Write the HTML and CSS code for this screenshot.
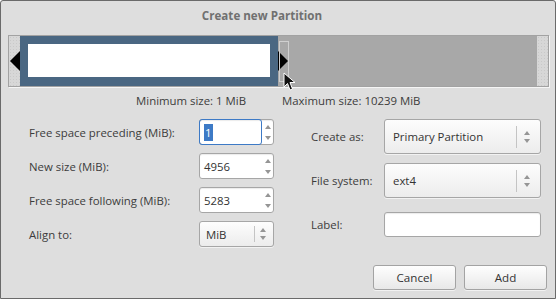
FILE: index.html
```html
<!DOCTYPE html>
<html lang="en">
<head>
    <meta charset="UTF-8">
    <title>Create new Partition</title>
    <link rel="stylesheet" href="styles.css">
</head>
<body>
    <div class="window">
        <div class="title">Create new Partition</div>

        <div class="bar">
            <div class="bar-free"></div>
            <div class="bar-part">
                <span class="handle handle-left"></span>
                <div class="bar-inner"></div>
                <span class="handle handle-right"></span>
                <span class="handle-box"></span>
            </div>
            <div class="bar-rest"></div>
            <div class="bar-free"></div>
            <svg class="cursor" width="13" height="20" viewBox="0 0 13 20">
                <path d="M1 1 L1 15 L4.5 11.5 L7 18 L9.5 17 L7 10.5 L12 10.5 Z" fill="#111" stroke="#fff" stroke-width="1"/>
            </svg>
        </div>

        <div class="limits">
            <span class="limit-min">Minimum size: 1 MiB</span>
            <span class="limit-max">Maximum size: 10239 MiB</span>
        </div>

        <div class="form">
            <div class="col-left">
                <label class="field-label">Free space preceding (MiB):</label>
                <div class="spin">
                    <span class="spin-entry focused"><span class="sel">1</span></span>
                    <span class="arrows"><i class="up"></i><i class="down"></i></span>
                </div>

                <label class="field-label">New size (MiB):</label>
                <div class="spin">
                    <span class="spin-entry">4956</span>
                    <span class="arrows"><i class="up"></i><i class="down"></i></span>
                </div>

                <label class="field-label">Free space following (MiB):</label>
                <div class="spin">
                    <span class="spin-entry">5283</span>
                    <span class="arrows"><i class="up"></i><i class="down"></i></span>
                </div>

                <label class="field-label">Align to:</label>
                <div class="combo combo-small">
                    <span class="combo-text">MiB</span>
                    <span class="combo-sep"></span>
                    <span class="arrows"><i class="up"></i><i class="down"></i></span>
                </div>
            </div>

            <div class="col-right">
                <label class="field-label">Create as:</label>
                <div class="combo">
                    <span class="combo-text">Primary Partition</span>
                    <span class="combo-sep"></span>
                    <span class="arrows"><i class="up"></i><i class="down"></i></span>
                </div>

                <label class="field-label">File system:</label>
                <div class="combo">
                    <span class="combo-text">ext4</span>
                    <span class="combo-sep"></span>
                    <span class="arrows"><i class="up"></i><i class="down"></i></span>
                </div>

                <label class="field-label label-row">Label:</label>
                <div class="entry label-row"></div>
            </div>
        </div>

        <div class="buttons">
            <button class="btn">Cancel</button>
            <button class="btn">Add</button>
        </div>
    </div>
</body>
</html>
```

FILE: styles.css
```css
body {
    margin: 0;
    font-family: 'Open Sans', 'Noto Sans', sans-serif;
    font-size: 11.4px;
    color: #3c3c3c;
}
.window {
    position: relative;
    width: 556px;
    height: 299px;
    box-sizing: border-box;
    border: 1px solid #6a6a6a;
    border-radius: 3px 3px 0 0;
    background: #dedede;
}
.title {
    height: 30px;
    line-height: 30px;
    text-align: center;
    font-weight: bold;
    font-size: 11.6px;
    color: #707070;
    margin-bottom: 4px;
    padding-right: 32px;
}

/* partition graphic */
.bar {
    position: relative;
    display: flex;
    margin-left: 7px;
    width: 541px;
    height: 52px;
    box-sizing: border-box;
    border: 1px solid #a2a2a2;
    box-shadow: 1px 1px 0 rgba(255, 255, 255, 0.7);
}
.bar-free {
    width: 11px;
    background-color: #d7d7d7;
    background-image: radial-gradient(#c9c9c9 0.6px, transparent 0.8px);
    background-size: 3px 3px;
}
.bar-part {
    position: relative;
    width: 258px;
    padding: 8px 8px 9px 8px;
    box-sizing: border-box;
    background: #4a6782;
}
.bar-inner {
    height: 100%;
    background: #fff;
}
.bar-rest {
    flex: 1;
    background: #a8a8a8;
}
.handle {
    position: absolute;
    top: 15px;
    width: 0;
    height: 0;
    border-top: 10px solid transparent;
    border-bottom: 10px solid transparent;
}
.handle-left {
    left: -10px;
    border-right: 10px solid #000;
}
.handle-right {
    right: -10px;
    border-left: 10px solid #000;
}
.handle-box {
    position: absolute;
    top: 5px;
    right: -11px;
    width: 8px;
    height: 39px;
    border: 1px solid #cfcfcf;
}
.cursor {
    position: absolute;
    left: 274px;
    top: 36px;
}

.limits {
    display: grid;
    grid-template-columns: 245px 1fr;
    line-height: 16px;
    margin-top: 6px;
}
.limit-min {
    text-align: right;
}
.limit-max {
    padding-left: 36px;
}

/* form */
.form {
    display: flex;
    margin-top: 10px;
    height: 128px;
}
.col-left {
    display: grid;
    grid-template-columns: 170px 75px;
    grid-auto-rows: 26px;
    row-gap: 8px;
    padding-left: 28px;
    align-items: center;
}
.col-right {
    display: grid;
    grid-template-columns: 73px 157px;
    grid-template-rows: 35px 35px 25px;
    row-gap: 9px;
    margin-left: 37px;
    align-items: center;
}
.label-row {
    margin-top: 10px;
}
.spin, .combo, .entry {
    box-sizing: border-box;
    height: 100%;
    border: 1px solid #a6a6a6;
    border-radius: 3px;
    display: flex;
    align-items: center;
}
.spin, .entry {
    background: #fff;
    box-shadow: inset 0 1px 1px rgba(0, 0, 0, 0.08);
}
.spin-entry {
    flex: 1;
    align-self: stretch;
    display: flex;
    align-items: center;
    padding-left: 4px;
    color: #333;
}
.spin-entry.focused {
    margin: -1px 0 -1px -1px;
    border: 1px solid #3d7ac6;
    border-radius: 3px;
}
.sel {
    background: #3d7ac6;
    color: #fff;
    padding: 1px 1px;
}
.arrows {
    width: 11px;
    display: flex;
    flex-direction: column;
    align-items: center;
    gap: 7px;
}
.arrows i {
    width: 0;
    height: 0;
    border-left: 3px solid transparent;
    border-right: 3px solid transparent;
}
.arrows .up {
    border-bottom: 4px solid #959595;
}
.arrows .down {
    border-top: 4px solid #959595;
}
.combo {
    background: linear-gradient(#fdfdfd, #ececec);
    box-shadow: 0 1px 0 rgba(255, 255, 255, 0.6);
}
.combo-text {
    flex: 1;
    padding-left: 8px;
    color: #333;
}
.combo-sep {
    width: 1px;
    height: 22px;
    background: #c4c4c4;
    margin-right: 4px;
}
.combo .arrows {
    margin-right: 8px;
    gap: 4px;
}
.combo-small .combo-text {
    padding-left: 6px;
}
.combo-small .combo-sep {
    height: 16px;
    margin-right: 2px;
}
.combo-small .arrows {
    margin-right: 5px;
}

/* buttons */
.buttons {
    display: flex;
    justify-content: flex-end;
    gap: 8px;
    margin-top: 18px;
    padding-right: 8px;
}
.btn {
    width: 83px;
    height: 25px;
    font-family: inherit;
    font-size: 11.6px;
    color: #333;
    border: 1px solid #a3a3a3;
    border-radius: 3px;
    background: linear-gradient(#fefefe, #e8e8e8);
    box-shadow: 0 1px 0 rgba(255, 255, 255, 0.6);
}
```
